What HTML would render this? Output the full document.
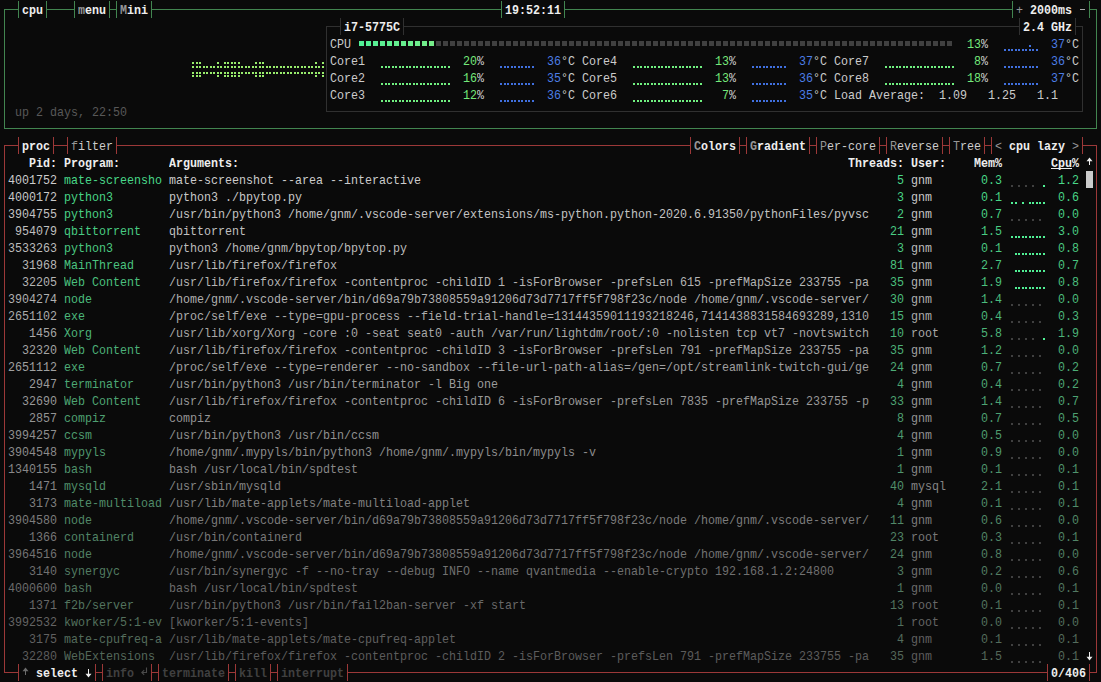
<!DOCTYPE html>
<html><head><meta charset="utf-8"><style>html,body{margin:0;padding:0;background:#0a0a0a;}
body{width:1101px;height:682px;overflow:hidden;position:relative;}
svg{position:absolute;left:0;top:0;}
i{position:absolute;font-style:normal;white-space:pre;font-family:"Liberation Mono";font-size:13.5px;line-height:17px;transform:scaleX(0.86406);transform-origin:0 0;}</style></head><body>
<svg width="1101" height="682" shape-rendering="crispEdges"><rect x="4" y="9" width="1093" height="1" fill="#428550"/><rect x="4" y="128" width="1093" height="1" fill="#428550"/><rect x="4" y="9" width="1" height="120" fill="#428550"/><rect x="1096" y="9" width="1" height="120" fill="#428550"/><rect x="19" y="9" width="27" height="1" fill="#0a0a0a"/><rect x="18" y="1" width="1" height="17" fill="#428550"/><rect x="46" y="1" width="1" height="17" fill="#428550"/><rect x="75" y="9" width="34" height="1" fill="#0a0a0a"/><rect x="74" y="1" width="1" height="17" fill="#428550"/><rect x="109" y="1" width="1" height="17" fill="#428550"/><rect x="117" y="9" width="34" height="1" fill="#0a0a0a"/><rect x="116" y="1" width="1" height="17" fill="#428550"/><rect x="151" y="1" width="1" height="17" fill="#428550"/><rect x="502" y="9" width="62" height="1" fill="#0a0a0a"/><rect x="501" y="1" width="1" height="17" fill="#428550"/><rect x="564" y="1" width="1" height="17" fill="#428550"/><rect x="1013" y="9" width="76" height="1" fill="#0a0a0a"/><rect x="1012" y="1" width="1" height="17" fill="#428550"/><rect x="1089" y="1" width="1" height="17" fill="#428550"/><rect x="1080" y="9" width="5" height="1" fill="#a8a8a8"/><rect x="192" y="66" width="2" height="2" fill="#98ec6c"/><rect x="192" y="72" width="2" height="2" fill="#98ec6c"/><rect x="192" y="62" width="2" height="2" fill="#98ec6c"/><rect x="192" y="75" width="2" height="2" fill="#98ec6c"/><rect x="196" y="66" width="2" height="2" fill="#98ec6c"/><rect x="196" y="72" width="2" height="2" fill="#98ec6c"/><rect x="196" y="62" width="2" height="2" fill="#98ec6c"/><rect x="196" y="75" width="2" height="2" fill="#98ec6c"/><rect x="199" y="66" width="2" height="2" fill="#98ec6c"/><rect x="199" y="72" width="2" height="2" fill="#98ec6c"/><rect x="199" y="62" width="2" height="2" fill="#98ec6c"/><rect x="199" y="75" width="2" height="2" fill="#98ec6c"/><rect x="203" y="66" width="2" height="2" fill="#98ec6c"/><rect x="203" y="72" width="2" height="2" fill="#98ec6c"/><rect x="206" y="66" width="2" height="2" fill="#98ec6c"/><rect x="206" y="72" width="2" height="2" fill="#98ec6c"/><rect x="210" y="66" width="2" height="2" fill="#98ec6c"/><rect x="210" y="72" width="2" height="2" fill="#98ec6c"/><rect x="213" y="66" width="2" height="2" fill="#98ec6c"/><rect x="213" y="72" width="2" height="2" fill="#98ec6c"/><rect x="217" y="66" width="2" height="2" fill="#98ec6c"/><rect x="217" y="72" width="2" height="2" fill="#98ec6c"/><rect x="217" y="62" width="2" height="2" fill="#98ec6c"/><rect x="217" y="75" width="2" height="2" fill="#98ec6c"/><rect x="220" y="66" width="2" height="2" fill="#98ec6c"/><rect x="220" y="72" width="2" height="2" fill="#98ec6c"/><rect x="224" y="66" width="2" height="2" fill="#98ec6c"/><rect x="224" y="72" width="2" height="2" fill="#98ec6c"/><rect x="224" y="62" width="2" height="2" fill="#98ec6c"/><rect x="224" y="75" width="2" height="2" fill="#98ec6c"/><rect x="227" y="66" width="2" height="2" fill="#98ec6c"/><rect x="227" y="72" width="2" height="2" fill="#98ec6c"/><rect x="227" y="62" width="2" height="2" fill="#98ec6c"/><rect x="227" y="75" width="2" height="2" fill="#98ec6c"/><rect x="231" y="66" width="2" height="2" fill="#98ec6c"/><rect x="231" y="72" width="2" height="2" fill="#98ec6c"/><rect x="231" y="62" width="2" height="2" fill="#98ec6c"/><rect x="231" y="75" width="2" height="2" fill="#98ec6c"/><rect x="234" y="66" width="2" height="2" fill="#98ec6c"/><rect x="234" y="72" width="2" height="2" fill="#98ec6c"/><rect x="234" y="62" width="2" height="2" fill="#98ec6c"/><rect x="234" y="75" width="2" height="2" fill="#98ec6c"/><rect x="238" y="66" width="2" height="2" fill="#98ec6c"/><rect x="238" y="72" width="2" height="2" fill="#98ec6c"/><rect x="238" y="62" width="2" height="2" fill="#98ec6c"/><rect x="238" y="75" width="2" height="2" fill="#98ec6c"/><rect x="241" y="66" width="2" height="2" fill="#98ec6c"/><rect x="241" y="72" width="2" height="2" fill="#98ec6c"/><rect x="245" y="66" width="2" height="2" fill="#98ec6c"/><rect x="245" y="72" width="2" height="2" fill="#98ec6c"/><rect x="248" y="66" width="2" height="2" fill="#98ec6c"/><rect x="248" y="72" width="2" height="2" fill="#98ec6c"/><rect x="252" y="66" width="2" height="2" fill="#98ec6c"/><rect x="252" y="72" width="2" height="2" fill="#98ec6c"/><rect x="255" y="66" width="2" height="2" fill="#98ec6c"/><rect x="255" y="72" width="2" height="2" fill="#98ec6c"/><rect x="255" y="62" width="2" height="2" fill="#98ec6c"/><rect x="255" y="75" width="2" height="2" fill="#98ec6c"/><rect x="259" y="66" width="2" height="2" fill="#98ec6c"/><rect x="259" y="72" width="2" height="2" fill="#98ec6c"/><rect x="259" y="62" width="2" height="2" fill="#98ec6c"/><rect x="259" y="75" width="2" height="2" fill="#98ec6c"/><rect x="262" y="66" width="2" height="2" fill="#98ec6c"/><rect x="262" y="72" width="2" height="2" fill="#98ec6c"/><rect x="262" y="62" width="2" height="2" fill="#98ec6c"/><rect x="262" y="75" width="2" height="2" fill="#98ec6c"/><rect x="266" y="66" width="2" height="2" fill="#98ec6c"/><rect x="266" y="72" width="2" height="2" fill="#98ec6c"/><rect x="269" y="66" width="2" height="2" fill="#98ec6c"/><rect x="269" y="72" width="2" height="2" fill="#98ec6c"/><rect x="273" y="66" width="2" height="2" fill="#98ec6c"/><rect x="273" y="72" width="2" height="2" fill="#98ec6c"/><rect x="276" y="66" width="2" height="2" fill="#98ec6c"/><rect x="276" y="72" width="2" height="2" fill="#98ec6c"/><rect x="280" y="66" width="2" height="2" fill="#98ec6c"/><rect x="280" y="72" width="2" height="2" fill="#98ec6c"/><rect x="283" y="66" width="2" height="2" fill="#98ec6c"/><rect x="283" y="72" width="2" height="2" fill="#98ec6c"/><rect x="287" y="66" width="2" height="2" fill="#98ec6c"/><rect x="287" y="72" width="2" height="2" fill="#98ec6c"/><rect x="290" y="66" width="2" height="2" fill="#98ec6c"/><rect x="290" y="72" width="2" height="2" fill="#98ec6c"/><rect x="294" y="66" width="2" height="2" fill="#98ec6c"/><rect x="294" y="72" width="2" height="2" fill="#98ec6c"/><rect x="297" y="66" width="2" height="2" fill="#98ec6c"/><rect x="297" y="72" width="2" height="2" fill="#98ec6c"/><rect x="301" y="66" width="2" height="2" fill="#98ec6c"/><rect x="301" y="72" width="2" height="2" fill="#98ec6c"/><rect x="304" y="66" width="2" height="2" fill="#98ec6c"/><rect x="304" y="72" width="2" height="2" fill="#98ec6c"/><rect x="308" y="66" width="2" height="2" fill="#98ec6c"/><rect x="308" y="72" width="2" height="2" fill="#98ec6c"/><rect x="311" y="66" width="2" height="2" fill="#98ec6c"/><rect x="311" y="72" width="2" height="2" fill="#98ec6c"/><rect x="315" y="66" width="2" height="2" fill="#98ec6c"/><rect x="315" y="72" width="2" height="2" fill="#98ec6c"/><rect x="315" y="62" width="2" height="2" fill="#98ec6c"/><rect x="315" y="75" width="2" height="2" fill="#98ec6c"/><rect x="318" y="66" width="2" height="2" fill="#98ec6c"/><rect x="318" y="72" width="2" height="2" fill="#98ec6c"/><rect x="322" y="66" width="2" height="2" fill="#98ec6c"/><rect x="322" y="72" width="2" height="2" fill="#98ec6c"/><rect x="322" y="62" width="2" height="2" fill="#98ec6c"/><rect x="322" y="75" width="2" height="2" fill="#98ec6c"/><rect x="326" y="26" width="757" height="1" fill="#303030"/><rect x="326" y="111" width="757" height="1" fill="#303030"/><rect x="326" y="26" width="1" height="86" fill="#303030"/><rect x="1082" y="26" width="1" height="86" fill="#303030"/><rect x="341" y="26" width="62" height="1" fill="#0a0a0a"/><rect x="340" y="18" width="1" height="17" fill="#303030"/><rect x="403" y="18" width="1" height="17" fill="#303030"/><rect x="1020" y="26" width="55" height="1" fill="#0a0a0a"/><rect x="1019" y="18" width="1" height="17" fill="#303030"/><rect x="1075" y="18" width="1" height="17" fill="#303030"/><rect x="359" y="41" width="5" height="5" fill="#50f095"/><rect x="366" y="41" width="5" height="5" fill="#54f094"/><rect x="373" y="41" width="5" height="5" fill="#58ef93"/><rect x="380" y="41" width="5" height="5" fill="#5bef92"/><rect x="387" y="41" width="5" height="5" fill="#5fef91"/><rect x="394" y="41" width="5" height="5" fill="#63ee8f"/><rect x="401" y="41" width="5" height="5" fill="#67ee8e"/><rect x="408" y="41" width="5" height="5" fill="#6bee8d"/><rect x="415" y="41" width="5" height="5" fill="#6eed8c"/><rect x="422" y="41" width="5" height="5" fill="#72ed8b"/><rect x="429" y="41" width="5" height="5" fill="#76ed8a"/><rect x="436" y="41" width="5" height="5" fill="#404040"/><rect x="443" y="41" width="5" height="5" fill="#404040"/><rect x="450" y="41" width="5" height="5" fill="#404040"/><rect x="457" y="41" width="5" height="5" fill="#404040"/><rect x="464" y="41" width="5" height="5" fill="#404040"/><rect x="471" y="41" width="5" height="5" fill="#404040"/><rect x="478" y="41" width="5" height="5" fill="#404040"/><rect x="485" y="41" width="5" height="5" fill="#404040"/><rect x="492" y="41" width="5" height="5" fill="#404040"/><rect x="499" y="41" width="5" height="5" fill="#404040"/><rect x="506" y="41" width="5" height="5" fill="#404040"/><rect x="513" y="41" width="5" height="5" fill="#404040"/><rect x="520" y="41" width="5" height="5" fill="#404040"/><rect x="527" y="41" width="5" height="5" fill="#404040"/><rect x="534" y="41" width="5" height="5" fill="#404040"/><rect x="541" y="41" width="5" height="5" fill="#404040"/><rect x="548" y="41" width="5" height="5" fill="#404040"/><rect x="555" y="41" width="5" height="5" fill="#404040"/><rect x="562" y="41" width="5" height="5" fill="#404040"/><rect x="569" y="41" width="5" height="5" fill="#404040"/><rect x="576" y="41" width="5" height="5" fill="#404040"/><rect x="583" y="41" width="5" height="5" fill="#404040"/><rect x="590" y="41" width="5" height="5" fill="#404040"/><rect x="597" y="41" width="5" height="5" fill="#404040"/><rect x="604" y="41" width="5" height="5" fill="#404040"/><rect x="611" y="41" width="5" height="5" fill="#404040"/><rect x="618" y="41" width="5" height="5" fill="#404040"/><rect x="625" y="41" width="5" height="5" fill="#404040"/><rect x="632" y="41" width="5" height="5" fill="#404040"/><rect x="639" y="41" width="5" height="5" fill="#404040"/><rect x="646" y="41" width="5" height="5" fill="#404040"/><rect x="653" y="41" width="5" height="5" fill="#404040"/><rect x="660" y="41" width="5" height="5" fill="#404040"/><rect x="667" y="41" width="5" height="5" fill="#404040"/><rect x="674" y="41" width="5" height="5" fill="#404040"/><rect x="681" y="41" width="5" height="5" fill="#404040"/><rect x="688" y="41" width="5" height="5" fill="#404040"/><rect x="695" y="41" width="5" height="5" fill="#404040"/><rect x="702" y="41" width="5" height="5" fill="#404040"/><rect x="709" y="41" width="5" height="5" fill="#404040"/><rect x="716" y="41" width="5" height="5" fill="#404040"/><rect x="723" y="41" width="5" height="5" fill="#404040"/><rect x="730" y="41" width="5" height="5" fill="#404040"/><rect x="737" y="41" width="5" height="5" fill="#404040"/><rect x="744" y="41" width="5" height="5" fill="#404040"/><rect x="751" y="41" width="5" height="5" fill="#404040"/><rect x="758" y="41" width="5" height="5" fill="#404040"/><rect x="765" y="41" width="5" height="5" fill="#404040"/><rect x="772" y="41" width="5" height="5" fill="#404040"/><rect x="779" y="41" width="5" height="5" fill="#404040"/><rect x="786" y="41" width="5" height="5" fill="#404040"/><rect x="793" y="41" width="5" height="5" fill="#404040"/><rect x="800" y="41" width="5" height="5" fill="#404040"/><rect x="807" y="41" width="5" height="5" fill="#404040"/><rect x="814" y="41" width="5" height="5" fill="#404040"/><rect x="821" y="41" width="5" height="5" fill="#404040"/><rect x="828" y="41" width="5" height="5" fill="#404040"/><rect x="835" y="41" width="5" height="5" fill="#404040"/><rect x="842" y="41" width="5" height="5" fill="#404040"/><rect x="849" y="41" width="5" height="5" fill="#404040"/><rect x="856" y="41" width="5" height="5" fill="#404040"/><rect x="863" y="41" width="5" height="5" fill="#404040"/><rect x="870" y="41" width="5" height="5" fill="#404040"/><rect x="877" y="41" width="5" height="5" fill="#404040"/><rect x="884" y="41" width="5" height="5" fill="#404040"/><rect x="891" y="41" width="5" height="5" fill="#404040"/><rect x="898" y="41" width="5" height="5" fill="#404040"/><rect x="905" y="41" width="5" height="5" fill="#404040"/><rect x="912" y="41" width="5" height="5" fill="#404040"/><rect x="919" y="41" width="5" height="5" fill="#404040"/><rect x="926" y="41" width="5" height="5" fill="#404040"/><rect x="933" y="41" width="5" height="5" fill="#404040"/><rect x="940" y="41" width="5" height="5" fill="#404040"/><rect x="947" y="41" width="5" height="5" fill="#404040"/><rect x="1004" y="49" width="2" height="2" fill="#4070e0"/><rect x="1008" y="49" width="2" height="2" fill="#4070e0"/><rect x="1011" y="49" width="2" height="2" fill="#4070e0"/><rect x="1015" y="49" width="2" height="2" fill="#4070e0"/><rect x="1018" y="49" width="2" height="2" fill="#4070e0"/><rect x="1022" y="49" width="2" height="2" fill="#4070e0"/><rect x="1025" y="49" width="2" height="2" fill="#4070e0"/><rect x="1029" y="49" width="2" height="2" fill="#4070e0"/><rect x="1032" y="49" width="2" height="2" fill="#4070e0"/><rect x="1036" y="49" width="2" height="2" fill="#4070e0"/><rect x="1029" y="45" width="2" height="2" fill="#4070e0"/><rect x="381" y="66" width="2" height="2" fill="#70f080"/><rect x="385" y="66" width="2" height="2" fill="#70f080"/><rect x="388" y="66" width="2" height="2" fill="#70f080"/><rect x="392" y="66" width="2" height="2" fill="#70f080"/><rect x="395" y="66" width="2" height="2" fill="#70f080"/><rect x="399" y="66" width="2" height="2" fill="#70f080"/><rect x="402" y="66" width="2" height="2" fill="#70f080"/><rect x="406" y="66" width="2" height="2" fill="#70f080"/><rect x="409" y="66" width="2" height="2" fill="#70f080"/><rect x="413" y="66" width="2" height="2" fill="#70f080"/><rect x="416" y="66" width="2" height="2" fill="#70f080"/><rect x="420" y="66" width="2" height="2" fill="#70f080"/><rect x="423" y="66" width="2" height="2" fill="#70f080"/><rect x="427" y="66" width="2" height="2" fill="#70f080"/><rect x="430" y="66" width="2" height="2" fill="#70f080"/><rect x="434" y="66" width="2" height="2" fill="#70f080"/><rect x="437" y="66" width="2" height="2" fill="#70f080"/><rect x="441" y="66" width="2" height="2" fill="#70f080"/><rect x="444" y="66" width="2" height="2" fill="#70f080"/><rect x="448" y="66" width="2" height="2" fill="#70f080"/><rect x="500" y="66" width="2" height="2" fill="#4070e0"/><rect x="504" y="66" width="2" height="2" fill="#4070e0"/><rect x="507" y="66" width="2" height="2" fill="#4070e0"/><rect x="511" y="66" width="2" height="2" fill="#4070e0"/><rect x="514" y="66" width="2" height="2" fill="#4070e0"/><rect x="518" y="66" width="2" height="2" fill="#4070e0"/><rect x="521" y="66" width="2" height="2" fill="#4070e0"/><rect x="525" y="66" width="2" height="2" fill="#4070e0"/><rect x="528" y="66" width="2" height="2" fill="#4070e0"/><rect x="532" y="66" width="2" height="2" fill="#4070e0"/><rect x="381" y="83" width="2" height="2" fill="#70f080"/><rect x="385" y="83" width="2" height="2" fill="#70f080"/><rect x="388" y="83" width="2" height="2" fill="#70f080"/><rect x="392" y="83" width="2" height="2" fill="#70f080"/><rect x="395" y="83" width="2" height="2" fill="#70f080"/><rect x="399" y="83" width="2" height="2" fill="#70f080"/><rect x="402" y="83" width="2" height="2" fill="#70f080"/><rect x="406" y="83" width="2" height="2" fill="#70f080"/><rect x="409" y="83" width="2" height="2" fill="#70f080"/><rect x="413" y="83" width="2" height="2" fill="#70f080"/><rect x="416" y="83" width="2" height="2" fill="#70f080"/><rect x="420" y="83" width="2" height="2" fill="#70f080"/><rect x="423" y="83" width="2" height="2" fill="#70f080"/><rect x="427" y="83" width="2" height="2" fill="#70f080"/><rect x="430" y="83" width="2" height="2" fill="#70f080"/><rect x="434" y="83" width="2" height="2" fill="#70f080"/><rect x="437" y="83" width="2" height="2" fill="#70f080"/><rect x="441" y="83" width="2" height="2" fill="#70f080"/><rect x="444" y="83" width="2" height="2" fill="#70f080"/><rect x="448" y="83" width="2" height="2" fill="#70f080"/><rect x="500" y="83" width="2" height="2" fill="#4070e0"/><rect x="504" y="83" width="2" height="2" fill="#4070e0"/><rect x="507" y="83" width="2" height="2" fill="#4070e0"/><rect x="511" y="83" width="2" height="2" fill="#4070e0"/><rect x="514" y="83" width="2" height="2" fill="#4070e0"/><rect x="518" y="83" width="2" height="2" fill="#4070e0"/><rect x="521" y="83" width="2" height="2" fill="#4070e0"/><rect x="525" y="83" width="2" height="2" fill="#4070e0"/><rect x="528" y="83" width="2" height="2" fill="#4070e0"/><rect x="532" y="83" width="2" height="2" fill="#4070e0"/><rect x="381" y="100" width="2" height="2" fill="#70f080"/><rect x="385" y="100" width="2" height="2" fill="#70f080"/><rect x="388" y="100" width="2" height="2" fill="#70f080"/><rect x="392" y="100" width="2" height="2" fill="#70f080"/><rect x="395" y="100" width="2" height="2" fill="#70f080"/><rect x="399" y="100" width="2" height="2" fill="#70f080"/><rect x="402" y="100" width="2" height="2" fill="#70f080"/><rect x="406" y="100" width="2" height="2" fill="#70f080"/><rect x="409" y="100" width="2" height="2" fill="#70f080"/><rect x="413" y="100" width="2" height="2" fill="#70f080"/><rect x="416" y="100" width="2" height="2" fill="#70f080"/><rect x="420" y="100" width="2" height="2" fill="#70f080"/><rect x="423" y="100" width="2" height="2" fill="#70f080"/><rect x="427" y="100" width="2" height="2" fill="#70f080"/><rect x="430" y="100" width="2" height="2" fill="#70f080"/><rect x="434" y="100" width="2" height="2" fill="#70f080"/><rect x="437" y="100" width="2" height="2" fill="#70f080"/><rect x="441" y="100" width="2" height="2" fill="#70f080"/><rect x="444" y="100" width="2" height="2" fill="#70f080"/><rect x="448" y="100" width="2" height="2" fill="#70f080"/><rect x="500" y="100" width="2" height="2" fill="#4070e0"/><rect x="504" y="100" width="2" height="2" fill="#4070e0"/><rect x="507" y="100" width="2" height="2" fill="#4070e0"/><rect x="511" y="100" width="2" height="2" fill="#4070e0"/><rect x="514" y="100" width="2" height="2" fill="#4070e0"/><rect x="518" y="100" width="2" height="2" fill="#4070e0"/><rect x="521" y="100" width="2" height="2" fill="#4070e0"/><rect x="525" y="100" width="2" height="2" fill="#4070e0"/><rect x="528" y="100" width="2" height="2" fill="#4070e0"/><rect x="532" y="100" width="2" height="2" fill="#4070e0"/><rect x="633" y="66" width="2" height="2" fill="#70f080"/><rect x="637" y="66" width="2" height="2" fill="#70f080"/><rect x="640" y="66" width="2" height="2" fill="#70f080"/><rect x="644" y="66" width="2" height="2" fill="#70f080"/><rect x="647" y="66" width="2" height="2" fill="#70f080"/><rect x="651" y="66" width="2" height="2" fill="#70f080"/><rect x="654" y="66" width="2" height="2" fill="#70f080"/><rect x="658" y="66" width="2" height="2" fill="#70f080"/><rect x="661" y="66" width="2" height="2" fill="#70f080"/><rect x="665" y="66" width="2" height="2" fill="#70f080"/><rect x="668" y="66" width="2" height="2" fill="#70f080"/><rect x="672" y="66" width="2" height="2" fill="#70f080"/><rect x="675" y="66" width="2" height="2" fill="#70f080"/><rect x="679" y="66" width="2" height="2" fill="#70f080"/><rect x="682" y="66" width="2" height="2" fill="#70f080"/><rect x="686" y="66" width="2" height="2" fill="#70f080"/><rect x="689" y="66" width="2" height="2" fill="#70f080"/><rect x="693" y="66" width="2" height="2" fill="#70f080"/><rect x="696" y="66" width="2" height="2" fill="#70f080"/><rect x="700" y="66" width="2" height="2" fill="#70f080"/><rect x="752" y="66" width="2" height="2" fill="#4070e0"/><rect x="756" y="66" width="2" height="2" fill="#4070e0"/><rect x="759" y="66" width="2" height="2" fill="#4070e0"/><rect x="763" y="66" width="2" height="2" fill="#4070e0"/><rect x="766" y="66" width="2" height="2" fill="#4070e0"/><rect x="770" y="66" width="2" height="2" fill="#4070e0"/><rect x="773" y="66" width="2" height="2" fill="#4070e0"/><rect x="777" y="66" width="2" height="2" fill="#4070e0"/><rect x="780" y="66" width="2" height="2" fill="#4070e0"/><rect x="784" y="66" width="2" height="2" fill="#4070e0"/><rect x="633" y="83" width="2" height="2" fill="#70f080"/><rect x="637" y="83" width="2" height="2" fill="#70f080"/><rect x="640" y="83" width="2" height="2" fill="#70f080"/><rect x="644" y="83" width="2" height="2" fill="#70f080"/><rect x="647" y="83" width="2" height="2" fill="#70f080"/><rect x="651" y="83" width="2" height="2" fill="#70f080"/><rect x="654" y="83" width="2" height="2" fill="#70f080"/><rect x="658" y="83" width="2" height="2" fill="#70f080"/><rect x="661" y="83" width="2" height="2" fill="#70f080"/><rect x="665" y="83" width="2" height="2" fill="#70f080"/><rect x="668" y="83" width="2" height="2" fill="#70f080"/><rect x="672" y="83" width="2" height="2" fill="#70f080"/><rect x="675" y="83" width="2" height="2" fill="#70f080"/><rect x="679" y="83" width="2" height="2" fill="#70f080"/><rect x="682" y="83" width="2" height="2" fill="#70f080"/><rect x="686" y="83" width="2" height="2" fill="#70f080"/><rect x="689" y="83" width="2" height="2" fill="#70f080"/><rect x="693" y="83" width="2" height="2" fill="#70f080"/><rect x="696" y="83" width="2" height="2" fill="#70f080"/><rect x="700" y="83" width="2" height="2" fill="#70f080"/><rect x="752" y="83" width="2" height="2" fill="#4070e0"/><rect x="756" y="83" width="2" height="2" fill="#4070e0"/><rect x="759" y="83" width="2" height="2" fill="#4070e0"/><rect x="763" y="83" width="2" height="2" fill="#4070e0"/><rect x="766" y="83" width="2" height="2" fill="#4070e0"/><rect x="770" y="83" width="2" height="2" fill="#4070e0"/><rect x="773" y="83" width="2" height="2" fill="#4070e0"/><rect x="777" y="83" width="2" height="2" fill="#4070e0"/><rect x="780" y="83" width="2" height="2" fill="#4070e0"/><rect x="784" y="83" width="2" height="2" fill="#4070e0"/><rect x="633" y="100" width="2" height="2" fill="#70f080"/><rect x="637" y="100" width="2" height="2" fill="#70f080"/><rect x="640" y="100" width="2" height="2" fill="#70f080"/><rect x="644" y="100" width="2" height="2" fill="#70f080"/><rect x="647" y="100" width="2" height="2" fill="#70f080"/><rect x="651" y="100" width="2" height="2" fill="#70f080"/><rect x="654" y="100" width="2" height="2" fill="#70f080"/><rect x="658" y="100" width="2" height="2" fill="#70f080"/><rect x="661" y="100" width="2" height="2" fill="#70f080"/><rect x="665" y="100" width="2" height="2" fill="#70f080"/><rect x="668" y="100" width="2" height="2" fill="#70f080"/><rect x="672" y="100" width="2" height="2" fill="#70f080"/><rect x="675" y="100" width="2" height="2" fill="#70f080"/><rect x="679" y="100" width="2" height="2" fill="#70f080"/><rect x="682" y="100" width="2" height="2" fill="#70f080"/><rect x="686" y="100" width="2" height="2" fill="#70f080"/><rect x="689" y="100" width="2" height="2" fill="#70f080"/><rect x="693" y="100" width="2" height="2" fill="#70f080"/><rect x="696" y="100" width="2" height="2" fill="#70f080"/><rect x="700" y="100" width="2" height="2" fill="#70f080"/><rect x="752" y="100" width="2" height="2" fill="#4070e0"/><rect x="756" y="100" width="2" height="2" fill="#4070e0"/><rect x="759" y="100" width="2" height="2" fill="#4070e0"/><rect x="763" y="100" width="2" height="2" fill="#4070e0"/><rect x="766" y="100" width="2" height="2" fill="#4070e0"/><rect x="770" y="100" width="2" height="2" fill="#4070e0"/><rect x="773" y="100" width="2" height="2" fill="#4070e0"/><rect x="777" y="100" width="2" height="2" fill="#4070e0"/><rect x="780" y="100" width="2" height="2" fill="#4070e0"/><rect x="784" y="100" width="2" height="2" fill="#4070e0"/><rect x="885" y="66" width="2" height="2" fill="#70f080"/><rect x="889" y="66" width="2" height="2" fill="#70f080"/><rect x="892" y="66" width="2" height="2" fill="#70f080"/><rect x="896" y="66" width="2" height="2" fill="#70f080"/><rect x="899" y="66" width="2" height="2" fill="#70f080"/><rect x="903" y="66" width="2" height="2" fill="#70f080"/><rect x="906" y="66" width="2" height="2" fill="#70f080"/><rect x="910" y="66" width="2" height="2" fill="#70f080"/><rect x="913" y="66" width="2" height="2" fill="#70f080"/><rect x="917" y="66" width="2" height="2" fill="#70f080"/><rect x="920" y="66" width="2" height="2" fill="#70f080"/><rect x="924" y="66" width="2" height="2" fill="#70f080"/><rect x="927" y="66" width="2" height="2" fill="#70f080"/><rect x="931" y="66" width="2" height="2" fill="#70f080"/><rect x="934" y="66" width="2" height="2" fill="#70f080"/><rect x="938" y="66" width="2" height="2" fill="#70f080"/><rect x="941" y="66" width="2" height="2" fill="#70f080"/><rect x="945" y="66" width="2" height="2" fill="#70f080"/><rect x="948" y="66" width="2" height="2" fill="#70f080"/><rect x="952" y="66" width="2" height="2" fill="#70f080"/><rect x="1004" y="66" width="2" height="2" fill="#4070e0"/><rect x="1008" y="66" width="2" height="2" fill="#4070e0"/><rect x="1011" y="66" width="2" height="2" fill="#4070e0"/><rect x="1015" y="66" width="2" height="2" fill="#4070e0"/><rect x="1018" y="66" width="2" height="2" fill="#4070e0"/><rect x="1022" y="66" width="2" height="2" fill="#4070e0"/><rect x="1025" y="66" width="2" height="2" fill="#4070e0"/><rect x="1029" y="66" width="2" height="2" fill="#4070e0"/><rect x="1032" y="66" width="2" height="2" fill="#4070e0"/><rect x="1036" y="66" width="2" height="2" fill="#4070e0"/><rect x="885" y="83" width="2" height="2" fill="#70f080"/><rect x="889" y="83" width="2" height="2" fill="#70f080"/><rect x="892" y="83" width="2" height="2" fill="#70f080"/><rect x="896" y="83" width="2" height="2" fill="#70f080"/><rect x="899" y="83" width="2" height="2" fill="#70f080"/><rect x="903" y="83" width="2" height="2" fill="#70f080"/><rect x="906" y="83" width="2" height="2" fill="#70f080"/><rect x="910" y="83" width="2" height="2" fill="#70f080"/><rect x="913" y="83" width="2" height="2" fill="#70f080"/><rect x="917" y="83" width="2" height="2" fill="#70f080"/><rect x="920" y="83" width="2" height="2" fill="#70f080"/><rect x="924" y="83" width="2" height="2" fill="#70f080"/><rect x="927" y="83" width="2" height="2" fill="#70f080"/><rect x="931" y="83" width="2" height="2" fill="#70f080"/><rect x="934" y="83" width="2" height="2" fill="#70f080"/><rect x="938" y="83" width="2" height="2" fill="#70f080"/><rect x="941" y="83" width="2" height="2" fill="#70f080"/><rect x="945" y="83" width="2" height="2" fill="#70f080"/><rect x="948" y="83" width="2" height="2" fill="#70f080"/><rect x="952" y="83" width="2" height="2" fill="#70f080"/><rect x="1004" y="83" width="2" height="2" fill="#4070e0"/><rect x="1008" y="83" width="2" height="2" fill="#4070e0"/><rect x="1011" y="83" width="2" height="2" fill="#4070e0"/><rect x="1015" y="83" width="2" height="2" fill="#4070e0"/><rect x="1018" y="83" width="2" height="2" fill="#4070e0"/><rect x="1022" y="83" width="2" height="2" fill="#4070e0"/><rect x="1025" y="83" width="2" height="2" fill="#4070e0"/><rect x="1029" y="83" width="2" height="2" fill="#4070e0"/><rect x="1032" y="83" width="2" height="2" fill="#4070e0"/><rect x="1036" y="83" width="2" height="2" fill="#4070e0"/><rect x="4" y="145" width="1093" height="1" fill="#9c3838"/><rect x="4" y="672" width="1093" height="1" fill="#9c3838"/><rect x="4" y="145" width="1" height="528" fill="#9c3838"/><rect x="1096" y="145" width="1" height="528" fill="#9c3838"/><rect x="19" y="145" width="34" height="1" fill="#0a0a0a"/><rect x="18" y="137" width="1" height="17" fill="#9c3838"/><rect x="53" y="137" width="1" height="17" fill="#9c3838"/><rect x="68" y="145" width="48" height="1" fill="#0a0a0a"/><rect x="67" y="137" width="1" height="17" fill="#9c3838"/><rect x="116" y="137" width="1" height="17" fill="#9c3838"/><rect x="691" y="145" width="48" height="1" fill="#0a0a0a"/><rect x="690" y="137" width="1" height="17" fill="#9c3838"/><rect x="739" y="137" width="1" height="17" fill="#9c3838"/><rect x="747" y="145" width="62" height="1" fill="#0a0a0a"/><rect x="746" y="137" width="1" height="17" fill="#9c3838"/><rect x="809" y="137" width="1" height="17" fill="#9c3838"/><rect x="817" y="145" width="62" height="1" fill="#0a0a0a"/><rect x="816" y="137" width="1" height="17" fill="#9c3838"/><rect x="879" y="137" width="1" height="17" fill="#9c3838"/><rect x="887" y="145" width="55" height="1" fill="#0a0a0a"/><rect x="886" y="137" width="1" height="17" fill="#9c3838"/><rect x="942" y="137" width="1" height="17" fill="#9c3838"/><rect x="950" y="145" width="34" height="1" fill="#0a0a0a"/><rect x="949" y="137" width="1" height="17" fill="#9c3838"/><rect x="984" y="137" width="1" height="17" fill="#9c3838"/><rect x="992" y="145" width="90" height="1" fill="#0a0a0a"/><rect x="991" y="137" width="1" height="17" fill="#9c3838"/><rect x="1082" y="137" width="1" height="17" fill="#9c3838"/><rect x="1051" y="168" width="21" height="1" fill="#eeeeee"/><polygon shape-rendering="auto" points="1086.5,161.2 1089.5,157.6 1092.5,161.2" fill="#eeeeee"/><rect x="1089" y="161" width="1" height="4" fill="#eeeeee"/><rect x="1011" y="185" width="2" height="2" fill="#404040"/><rect x="1018" y="185" width="2" height="2" fill="#404040"/><rect x="1025" y="185" width="2" height="2" fill="#404040"/><rect x="1032" y="185" width="2" height="2" fill="#404040"/><rect x="1043" y="185" width="2" height="2" fill="#50f095"/><rect x="1011" y="202" width="2" height="2" fill="#50f095"/><rect x="1015" y="202" width="2" height="2" fill="#50f095"/><rect x="1022" y="202" width="2" height="2" fill="#50f095"/><rect x="1029" y="202" width="2" height="2" fill="#50f095"/><rect x="1032" y="202" width="2" height="2" fill="#50f095"/><rect x="1036" y="202" width="2" height="2" fill="#50f095"/><rect x="1039" y="202" width="2" height="2" fill="#50f095"/><rect x="1043" y="202" width="2" height="2" fill="#50f095"/><rect x="1011" y="219" width="2" height="2" fill="#404040"/><rect x="1018" y="219" width="2" height="2" fill="#404040"/><rect x="1025" y="219" width="2" height="2" fill="#404040"/><rect x="1032" y="219" width="2" height="2" fill="#404040"/><rect x="1039" y="219" width="2" height="2" fill="#404040"/><rect x="1011" y="236" width="2" height="2" fill="#50f095"/><rect x="1015" y="236" width="2" height="2" fill="#50f095"/><rect x="1018" y="236" width="2" height="2" fill="#50f095"/><rect x="1022" y="236" width="2" height="2" fill="#50f095"/><rect x="1025" y="236" width="2" height="2" fill="#50f095"/><rect x="1029" y="236" width="2" height="2" fill="#50f095"/><rect x="1032" y="236" width="2" height="2" fill="#50f095"/><rect x="1036" y="236" width="2" height="2" fill="#50f095"/><rect x="1039" y="236" width="2" height="2" fill="#50f095"/><rect x="1043" y="236" width="2" height="2" fill="#50f095"/><rect x="1015" y="253" width="2" height="2" fill="#50f095"/><rect x="1018" y="253" width="2" height="2" fill="#50f095"/><rect x="1022" y="253" width="2" height="2" fill="#50f095"/><rect x="1025" y="253" width="2" height="2" fill="#50f095"/><rect x="1029" y="253" width="2" height="2" fill="#50f095"/><rect x="1032" y="253" width="2" height="2" fill="#50f095"/><rect x="1036" y="253" width="2" height="2" fill="#50f095"/><rect x="1039" y="253" width="2" height="2" fill="#50f095"/><rect x="1043" y="253" width="2" height="2" fill="#50f095"/><rect x="1015" y="270" width="2" height="2" fill="#50f095"/><rect x="1018" y="270" width="2" height="2" fill="#50f095"/><rect x="1022" y="270" width="2" height="2" fill="#50f095"/><rect x="1025" y="270" width="2" height="2" fill="#50f095"/><rect x="1029" y="270" width="2" height="2" fill="#50f095"/><rect x="1032" y="270" width="2" height="2" fill="#50f095"/><rect x="1036" y="270" width="2" height="2" fill="#50f095"/><rect x="1039" y="270" width="2" height="2" fill="#50f095"/><rect x="1043" y="270" width="2" height="2" fill="#50f095"/><rect x="1015" y="287" width="2" height="2" fill="#50f095"/><rect x="1018" y="287" width="2" height="2" fill="#50f095"/><rect x="1022" y="287" width="2" height="2" fill="#50f095"/><rect x="1025" y="287" width="2" height="2" fill="#50f095"/><rect x="1029" y="287" width="2" height="2" fill="#50f095"/><rect x="1032" y="287" width="2" height="2" fill="#50f095"/><rect x="1036" y="287" width="2" height="2" fill="#50f095"/><rect x="1039" y="287" width="2" height="2" fill="#50f095"/><rect x="1043" y="287" width="2" height="2" fill="#50f095"/><rect x="1011" y="304" width="2" height="2" fill="#404040"/><rect x="1018" y="304" width="2" height="2" fill="#404040"/><rect x="1025" y="304" width="2" height="2" fill="#404040"/><rect x="1032" y="304" width="2" height="2" fill="#404040"/><rect x="1039" y="304" width="2" height="2" fill="#404040"/><rect x="1011" y="321" width="2" height="2" fill="#404040"/><rect x="1018" y="321" width="2" height="2" fill="#404040"/><rect x="1025" y="321" width="2" height="2" fill="#404040"/><rect x="1032" y="321" width="2" height="2" fill="#404040"/><rect x="1039" y="321" width="2" height="2" fill="#404040"/><rect x="1011" y="338" width="2" height="2" fill="#404040"/><rect x="1018" y="338" width="2" height="2" fill="#404040"/><rect x="1025" y="338" width="2" height="2" fill="#404040"/><rect x="1032" y="338" width="2" height="2" fill="#404040"/><rect x="1043" y="338" width="2" height="2" fill="#50f095"/><rect x="1011" y="355" width="2" height="2" fill="#404040"/><rect x="1018" y="355" width="2" height="2" fill="#404040"/><rect x="1025" y="355" width="2" height="2" fill="#404040"/><rect x="1032" y="355" width="2" height="2" fill="#404040"/><rect x="1039" y="355" width="2" height="2" fill="#404040"/><rect x="1011" y="372" width="2" height="2" fill="#404040"/><rect x="1018" y="372" width="2" height="2" fill="#404040"/><rect x="1025" y="372" width="2" height="2" fill="#404040"/><rect x="1032" y="372" width="2" height="2" fill="#404040"/><rect x="1039" y="372" width="2" height="2" fill="#404040"/><rect x="1011" y="389" width="2" height="2" fill="#404040"/><rect x="1018" y="389" width="2" height="2" fill="#404040"/><rect x="1025" y="389" width="2" height="2" fill="#404040"/><rect x="1032" y="389" width="2" height="2" fill="#404040"/><rect x="1039" y="389" width="2" height="2" fill="#404040"/><rect x="1011" y="406" width="2" height="2" fill="#404040"/><rect x="1018" y="406" width="2" height="2" fill="#404040"/><rect x="1025" y="406" width="2" height="2" fill="#404040"/><rect x="1032" y="406" width="2" height="2" fill="#404040"/><rect x="1039" y="406" width="2" height="2" fill="#404040"/><rect x="1011" y="423" width="2" height="2" fill="#404040"/><rect x="1018" y="423" width="2" height="2" fill="#404040"/><rect x="1025" y="423" width="2" height="2" fill="#404040"/><rect x="1032" y="423" width="2" height="2" fill="#404040"/><rect x="1039" y="423" width="2" height="2" fill="#404040"/><rect x="1011" y="440" width="2" height="2" fill="#404040"/><rect x="1018" y="440" width="2" height="2" fill="#404040"/><rect x="1025" y="440" width="2" height="2" fill="#404040"/><rect x="1032" y="440" width="2" height="2" fill="#404040"/><rect x="1039" y="440" width="2" height="2" fill="#404040"/><rect x="1011" y="457" width="2" height="2" fill="#404040"/><rect x="1018" y="457" width="2" height="2" fill="#404040"/><rect x="1025" y="457" width="2" height="2" fill="#404040"/><rect x="1032" y="457" width="2" height="2" fill="#404040"/><rect x="1039" y="457" width="2" height="2" fill="#404040"/><rect x="1011" y="474" width="2" height="2" fill="#404040"/><rect x="1018" y="474" width="2" height="2" fill="#404040"/><rect x="1025" y="474" width="2" height="2" fill="#404040"/><rect x="1032" y="474" width="2" height="2" fill="#404040"/><rect x="1039" y="474" width="2" height="2" fill="#404040"/><rect x="1011" y="491" width="2" height="2" fill="#404040"/><rect x="1018" y="491" width="2" height="2" fill="#404040"/><rect x="1025" y="491" width="2" height="2" fill="#404040"/><rect x="1032" y="491" width="2" height="2" fill="#404040"/><rect x="1039" y="491" width="2" height="2" fill="#404040"/><rect x="1011" y="508" width="2" height="2" fill="#404040"/><rect x="1018" y="508" width="2" height="2" fill="#404040"/><rect x="1025" y="508" width="2" height="2" fill="#404040"/><rect x="1032" y="508" width="2" height="2" fill="#404040"/><rect x="1039" y="508" width="2" height="2" fill="#404040"/><rect x="1011" y="525" width="2" height="2" fill="#404040"/><rect x="1018" y="525" width="2" height="2" fill="#404040"/><rect x="1025" y="525" width="2" height="2" fill="#404040"/><rect x="1032" y="525" width="2" height="2" fill="#404040"/><rect x="1039" y="525" width="2" height="2" fill="#404040"/><rect x="1011" y="542" width="2" height="2" fill="#404040"/><rect x="1018" y="542" width="2" height="2" fill="#404040"/><rect x="1025" y="542" width="2" height="2" fill="#404040"/><rect x="1032" y="542" width="2" height="2" fill="#404040"/><rect x="1039" y="542" width="2" height="2" fill="#404040"/><rect x="1011" y="559" width="2" height="2" fill="#404040"/><rect x="1018" y="559" width="2" height="2" fill="#404040"/><rect x="1025" y="559" width="2" height="2" fill="#404040"/><rect x="1032" y="559" width="2" height="2" fill="#404040"/><rect x="1039" y="559" width="2" height="2" fill="#404040"/><rect x="1011" y="576" width="2" height="2" fill="#404040"/><rect x="1018" y="576" width="2" height="2" fill="#404040"/><rect x="1025" y="576" width="2" height="2" fill="#404040"/><rect x="1032" y="576" width="2" height="2" fill="#404040"/><rect x="1039" y="576" width="2" height="2" fill="#404040"/><rect x="1011" y="593" width="2" height="2" fill="#404040"/><rect x="1018" y="593" width="2" height="2" fill="#404040"/><rect x="1025" y="593" width="2" height="2" fill="#404040"/><rect x="1032" y="593" width="2" height="2" fill="#404040"/><rect x="1039" y="593" width="2" height="2" fill="#404040"/><rect x="1011" y="610" width="2" height="2" fill="#404040"/><rect x="1018" y="610" width="2" height="2" fill="#404040"/><rect x="1025" y="610" width="2" height="2" fill="#404040"/><rect x="1032" y="610" width="2" height="2" fill="#404040"/><rect x="1039" y="610" width="2" height="2" fill="#404040"/><rect x="1011" y="627" width="2" height="2" fill="#404040"/><rect x="1018" y="627" width="2" height="2" fill="#404040"/><rect x="1025" y="627" width="2" height="2" fill="#404040"/><rect x="1032" y="627" width="2" height="2" fill="#404040"/><rect x="1039" y="627" width="2" height="2" fill="#404040"/><rect x="1011" y="644" width="2" height="2" fill="#404040"/><rect x="1018" y="644" width="2" height="2" fill="#404040"/><rect x="1025" y="644" width="2" height="2" fill="#404040"/><rect x="1032" y="644" width="2" height="2" fill="#404040"/><rect x="1039" y="644" width="2" height="2" fill="#404040"/><rect x="1011" y="661" width="2" height="2" fill="#404040"/><rect x="1018" y="661" width="2" height="2" fill="#404040"/><rect x="1025" y="661" width="2" height="2" fill="#404040"/><rect x="1032" y="661" width="2" height="2" fill="#404040"/><rect x="1039" y="661" width="2" height="2" fill="#404040"/><rect x="1086" y="171" width="7" height="17" fill="#cccccc"/><rect x="1089" y="652" width="1" height="5" fill="#eeeeee"/><polygon shape-rendering="auto" points="1086.5,656.8 1089.5,660.4 1092.5,656.8" fill="#eeeeee"/><rect x="19" y="672" width="76" height="1" fill="#0a0a0a"/><rect x="18" y="664" width="1" height="17" fill="#9c3838"/><rect x="95" y="664" width="1" height="17" fill="#9c3838"/><polygon shape-rendering="auto" points="22.5,671.2 25.5,667.6 28.5,671.2" fill="#6c6c6c"/><rect x="25" y="671" width="1" height="4" fill="#6c6c6c"/><rect x="88" y="669" width="1" height="5" fill="#eeeeee"/><polygon shape-rendering="auto" points="85.5,673.8 88.5,677.4 91.5,673.8" fill="#eeeeee"/><rect x="103" y="672" width="48" height="1" fill="#0a0a0a"/><rect x="102" y="664" width="1" height="17" fill="#9c3838"/><rect x="151" y="664" width="1" height="17" fill="#9c3838"/><rect x="159" y="672" width="69" height="1" fill="#0a0a0a"/><rect x="158" y="664" width="1" height="17" fill="#9c3838"/><rect x="228" y="664" width="1" height="17" fill="#9c3838"/><rect x="236" y="672" width="34" height="1" fill="#0a0a0a"/><rect x="235" y="664" width="1" height="17" fill="#9c3838"/><rect x="270" y="664" width="1" height="17" fill="#9c3838"/><rect x="278" y="672" width="69" height="1" fill="#0a0a0a"/><rect x="277" y="664" width="1" height="17" fill="#9c3838"/><rect x="347" y="664" width="1" height="17" fill="#9c3838"/><rect x="1048" y="672" width="41" height="1" fill="#0a0a0a"/><rect x="1047" y="664" width="1" height="17" fill="#9c3838"/><rect x="1089" y="664" width="1" height="17" fill="#9c3838"/><path shape-rendering="auto" d="M146.5 667.5V672.5H142.5M144.2 670.2L141.8 672.5L144.2 674.8" stroke="#4a4a4a" fill="none" stroke-width="1.1"/></svg>
<i style="left:22px;top:2px;color:#eeeeee;font-weight:bold">cpu</i><i style="left:78px;top:2px;color:#969696;font-weight:bold">m</i><i style="left:85px;top:2px;color:#eeeeee;font-weight:bold">enu</i><i style="left:120px;top:2px;color:#969696;font-weight:bold">M</i><i style="left:127px;top:2px;color:#eeeeee;font-weight:bold">ini</i><i style="left:505px;top:2px;color:#eeeeee;font-weight:bold">19:52:11</i><i style="left:1016px;top:2px;color:#969696">+</i><i style="left:1030px;top:2px;color:#eeeeee;font-weight:bold">2000ms</i><i style="left:15px;top:104px;color:#585858">up 2 days, 22:50</i><i style="left:344px;top:19px;color:#eeeeee;font-weight:bold">i7-5775C</i><i style="left:1023px;top:19px;color:#eeeeee;font-weight:bold">2.4 GHz</i><i style="left:330px;top:36px;color:#cccccc">CPU</i><i style="left:967px;top:36px;color:#74e87a">13</i><i style="left:981px;top:36px;color:#cccccc">%</i><i style="left:1051px;top:36px;color:#4c7ee6">37</i><i style="left:1065px;top:36px;color:#cccccc">°C</i><i style="left:330px;top:53px;color:#cccccc">Core1</i><i style="left:463px;top:53px;color:#74e87a">20</i><i style="left:477px;top:53px;color:#cccccc">%</i><i style="left:547px;top:53px;color:#4c7ee6">36</i><i style="left:561px;top:53px;color:#cccccc">°C</i><i style="left:330px;top:70px;color:#cccccc">Core2</i><i style="left:463px;top:70px;color:#74e87a">16</i><i style="left:477px;top:70px;color:#cccccc">%</i><i style="left:547px;top:70px;color:#4c7ee6">35</i><i style="left:561px;top:70px;color:#cccccc">°C</i><i style="left:330px;top:87px;color:#cccccc">Core3</i><i style="left:463px;top:87px;color:#74e87a">12</i><i style="left:477px;top:87px;color:#cccccc">%</i><i style="left:547px;top:87px;color:#4c7ee6">36</i><i style="left:561px;top:87px;color:#cccccc">°C</i><i style="left:582px;top:53px;color:#cccccc">Core4</i><i style="left:715px;top:53px;color:#74e87a">13</i><i style="left:729px;top:53px;color:#cccccc">%</i><i style="left:799px;top:53px;color:#4c7ee6">37</i><i style="left:813px;top:53px;color:#cccccc">°C</i><i style="left:582px;top:70px;color:#cccccc">Core5</i><i style="left:715px;top:70px;color:#74e87a">13</i><i style="left:729px;top:70px;color:#cccccc">%</i><i style="left:799px;top:70px;color:#4c7ee6">36</i><i style="left:813px;top:70px;color:#cccccc">°C</i><i style="left:582px;top:87px;color:#cccccc">Core6</i><i style="left:722px;top:87px;color:#74e87a">7</i><i style="left:729px;top:87px;color:#cccccc">%</i><i style="left:799px;top:87px;color:#4c7ee6">35</i><i style="left:813px;top:87px;color:#cccccc">°C</i><i style="left:834px;top:53px;color:#cccccc">Core7</i><i style="left:974px;top:53px;color:#74e87a">8</i><i style="left:981px;top:53px;color:#cccccc">%</i><i style="left:1051px;top:53px;color:#4c7ee6">36</i><i style="left:1065px;top:53px;color:#cccccc">°C</i><i style="left:834px;top:70px;color:#cccccc">Core8</i><i style="left:967px;top:70px;color:#74e87a">18</i><i style="left:981px;top:70px;color:#cccccc">%</i><i style="left:1051px;top:70px;color:#4c7ee6">37</i><i style="left:1065px;top:70px;color:#cccccc">°C</i><i style="left:834px;top:87px;color:#cccccc">Load Average:</i><i style="left:939px;top:87px;color:#cccccc">1.09</i><i style="left:988px;top:87px;color:#cccccc">1.25</i><i style="left:1037px;top:87px;color:#cccccc">1.1</i><i style="left:22px;top:138px;color:#eeeeee;font-weight:bold">proc</i><i style="left:71px;top:138px;color:#969696">f</i><i style="left:78px;top:138px;color:#cccccc">ilter</i><i style="left:694px;top:138px;color:#969696;font-weight:bold">C</i><i style="left:701px;top:138px;color:#eeeeee;font-weight:bold">olors</i><i style="left:750px;top:138px;color:#969696;font-weight:bold">G</i><i style="left:757px;top:138px;color:#eeeeee;font-weight:bold">radient</i><i style="left:820px;top:138px;color:#969696">P</i><i style="left:827px;top:138px;color:#cccccc">er-core</i><i style="left:890px;top:138px;color:#969696">R</i><i style="left:897px;top:138px;color:#cccccc">everse</i><i style="left:953px;top:138px;color:#969696">T</i><i style="left:960px;top:138px;color:#cccccc">ree</i><i style="left:995px;top:138px;color:#969696">&lt;</i><i style="left:1002px;top:138px;color:#eeeeee;font-weight:bold"> cpu lazy </i><i style="left:1072px;top:138px;color:#969696">&gt;</i><i style="left:29px;top:155px;color:#eeeeee;font-weight:bold">Pid:</i><i style="left:64px;top:155px;color:#eeeeee;font-weight:bold">Program:</i><i style="left:169px;top:155px;color:#eeeeee;font-weight:bold">Arguments:</i><i style="left:848px;top:155px;color:#eeeeee;font-weight:bold">Threads:</i><i style="left:911px;top:155px;color:#eeeeee;font-weight:bold">User:</i><i style="left:974px;top:155px;color:#eeeeee;font-weight:bold">Mem%</i><i style="left:1051px;top:155px;color:#eeeeee;font-weight:bold">Cpu%</i><i style="left:8px;top:172px;color:#cccccc">4001752</i><i style="left:64px;top:172px;color:#48d888">mate-screensho</i><i style="left:169px;top:172px;color:#cccccc">mate-screenshot --area --interactive</i><i style="left:897px;top:172px;color:#48d888">5</i><i style="left:911px;top:172px;color:#cccccc">gnm</i><i style="left:981px;top:172px;color:#48d888">0.3</i><i style="left:1058px;top:172px;color:#48d888">1.2</i><i style="left:8px;top:189px;color:#c8c8c8">4000172</i><i style="left:64px;top:189px;color:#48d486">python3</i><i style="left:169px;top:189px;color:#c8c8c8">python3 ./bpytop.py</i><i style="left:897px;top:189px;color:#48d486">3</i><i style="left:911px;top:189px;color:#c8c8c8">gnm</i><i style="left:981px;top:189px;color:#48d486">0.1</i><i style="left:1058px;top:189px;color:#48d486">0.6</i><i style="left:8px;top:206px;color:#c4c4c4">3904755</i><i style="left:64px;top:206px;color:#49d085">python3</i><i style="left:169px;top:206px;color:#c4c4c4">/usr/bin/python3 /home/gnm/.vscode-server/extensions/ms-python.python-2020.6.91350/pythonFiles/pyvsc</i><i style="left:897px;top:206px;color:#49d085">2</i><i style="left:911px;top:206px;color:#c4c4c4">gnm</i><i style="left:981px;top:206px;color:#49d085">0.7</i><i style="left:1058px;top:206px;color:#49d085">0.0</i><i style="left:15px;top:223px;color:#c0c0c0">954079</i><i style="left:64px;top:223px;color:#49cc83">qbittorrent</i><i style="left:169px;top:223px;color:#c0c0c0">qbittorrent</i><i style="left:890px;top:223px;color:#49cc83">21</i><i style="left:911px;top:223px;color:#c0c0c0">gnm</i><i style="left:981px;top:223px;color:#49cc83">1.5</i><i style="left:1058px;top:223px;color:#49cc83">3.0</i><i style="left:8px;top:240px;color:#bcbcbc">3533263</i><i style="left:64px;top:240px;color:#4ac881">python3</i><i style="left:169px;top:240px;color:#bcbcbc">python3 /home/gnm/bpytop/bpytop.py</i><i style="left:897px;top:240px;color:#4ac881">3</i><i style="left:911px;top:240px;color:#bcbcbc">gnm</i><i style="left:981px;top:240px;color:#4ac881">0.1</i><i style="left:1058px;top:240px;color:#4ac881">0.8</i><i style="left:22px;top:257px;color:#b8b8b8">31968</i><i style="left:64px;top:257px;color:#4ac480">MainThread</i><i style="left:169px;top:257px;color:#b8b8b8">/usr/lib/firefox/firefox</i><i style="left:890px;top:257px;color:#4ac480">81</i><i style="left:911px;top:257px;color:#b8b8b8">gnm</i><i style="left:981px;top:257px;color:#4ac480">2.7</i><i style="left:1058px;top:257px;color:#4ac480">0.7</i><i style="left:22px;top:274px;color:#b4b4b4">32205</i><i style="left:64px;top:274px;color:#4bc07e">Web Content</i><i style="left:169px;top:274px;color:#b4b4b4">/usr/lib/firefox/firefox -contentproc -childID 1 -isForBrowser -prefsLen 615 -prefMapSize 233755 -pa</i><i style="left:890px;top:274px;color:#4bc07e">35</i><i style="left:911px;top:274px;color:#b4b4b4">gnm</i><i style="left:981px;top:274px;color:#4bc07e">1.9</i><i style="left:1058px;top:274px;color:#4bc07e">0.8</i><i style="left:8px;top:291px;color:#b0b0b0">3904274</i><i style="left:64px;top:291px;color:#4bbc7c">node</i><i style="left:169px;top:291px;color:#b0b0b0">/home/gnm/.vscode-server/bin/d69a79b73808559a91206d73d7717ff5f798f23c/node /home/gnm/.vscode-server/</i><i style="left:890px;top:291px;color:#4bbc7c">30</i><i style="left:911px;top:291px;color:#b0b0b0">gnm</i><i style="left:981px;top:291px;color:#4bbc7c">1.4</i><i style="left:1058px;top:291px;color:#4bbc7c">0.0</i><i style="left:8px;top:308px;color:#acacac">2651102</i><i style="left:64px;top:308px;color:#4bb87b">exe</i><i style="left:169px;top:308px;color:#acacac">/proc/self/exe --type=gpu-process --field-trial-handle=13144359011193218246,7141438831584693289,1310</i><i style="left:890px;top:308px;color:#4bb87b">15</i><i style="left:911px;top:308px;color:#acacac">gnm</i><i style="left:981px;top:308px;color:#4bb87b">0.4</i><i style="left:1058px;top:308px;color:#4bb87b">0.3</i><i style="left:29px;top:325px;color:#a8a8a8">1456</i><i style="left:64px;top:325px;color:#4cb479">Xorg</i><i style="left:169px;top:325px;color:#a8a8a8">/usr/lib/xorg/Xorg -core :0 -seat seat0 -auth /var/run/lightdm/root/:0 -nolisten tcp vt7 -novtswitch</i><i style="left:890px;top:325px;color:#4cb479">10</i><i style="left:911px;top:325px;color:#a8a8a8">root</i><i style="left:981px;top:325px;color:#4cb479">5.8</i><i style="left:1058px;top:325px;color:#4cb479">1.9</i><i style="left:22px;top:342px;color:#a4a4a4">32320</i><i style="left:64px;top:342px;color:#4cb078">Web Content</i><i style="left:169px;top:342px;color:#a4a4a4">/usr/lib/firefox/firefox -contentproc -childID 3 -isForBrowser -prefsLen 791 -prefMapSize 233755 -pa</i><i style="left:890px;top:342px;color:#4cb078">35</i><i style="left:911px;top:342px;color:#a4a4a4">gnm</i><i style="left:981px;top:342px;color:#4cb078">1.2</i><i style="left:1058px;top:342px;color:#4cb078">0.0</i><i style="left:8px;top:359px;color:#a0a0a0">2651112</i><i style="left:64px;top:359px;color:#4dac76">exe</i><i style="left:169px;top:359px;color:#a0a0a0">/proc/self/exe --type=renderer --no-sandbox --file-url-path-alias=/gen=/opt/streamlink-twitch-gui/ge</i><i style="left:890px;top:359px;color:#4dac76">24</i><i style="left:911px;top:359px;color:#a0a0a0">gnm</i><i style="left:981px;top:359px;color:#4dac76">0.7</i><i style="left:1058px;top:359px;color:#4dac76">0.2</i><i style="left:29px;top:376px;color:#9c9c9c">2947</i><i style="left:64px;top:376px;color:#4da874">terminator</i><i style="left:169px;top:376px;color:#9c9c9c">/usr/bin/python3 /usr/bin/terminator -l Big one</i><i style="left:897px;top:376px;color:#4da874">4</i><i style="left:911px;top:376px;color:#9c9c9c">gnm</i><i style="left:981px;top:376px;color:#4da874">0.4</i><i style="left:1058px;top:376px;color:#4da874">0.2</i><i style="left:22px;top:393px;color:#989898">32690</i><i style="left:64px;top:393px;color:#4ea473">Web Content</i><i style="left:169px;top:393px;color:#989898">/usr/lib/firefox/firefox -contentproc -childID 6 -isForBrowser -prefsLen 7835 -prefMapSize 233755 -p</i><i style="left:890px;top:393px;color:#4ea473">33</i><i style="left:911px;top:393px;color:#989898">gnm</i><i style="left:981px;top:393px;color:#4ea473">1.4</i><i style="left:1058px;top:393px;color:#4ea473">0.7</i><i style="left:29px;top:410px;color:#949494">2857</i><i style="left:64px;top:410px;color:#4ea071">compiz</i><i style="left:169px;top:410px;color:#949494">compiz</i><i style="left:897px;top:410px;color:#4ea071">8</i><i style="left:911px;top:410px;color:#949494">gnm</i><i style="left:981px;top:410px;color:#4ea071">0.7</i><i style="left:1058px;top:410px;color:#4ea071">0.5</i><i style="left:8px;top:427px;color:#909090">3994257</i><i style="left:64px;top:427px;color:#4e9c6f">ccsm</i><i style="left:169px;top:427px;color:#909090">/usr/bin/python3 /usr/bin/ccsm</i><i style="left:897px;top:427px;color:#4e9c6f">4</i><i style="left:911px;top:427px;color:#909090">gnm</i><i style="left:981px;top:427px;color:#4e9c6f">0.5</i><i style="left:1058px;top:427px;color:#4e9c6f">0.0</i><i style="left:8px;top:444px;color:#8c8c8c">3904548</i><i style="left:64px;top:444px;color:#4f986e">mypyls</i><i style="left:169px;top:444px;color:#8c8c8c">/home/gnm/.mypyls/bin/python3 /home/gnm/.mypyls/bin/mypyls -v</i><i style="left:897px;top:444px;color:#4f986e">1</i><i style="left:911px;top:444px;color:#8c8c8c">gnm</i><i style="left:981px;top:444px;color:#4f986e">0.9</i><i style="left:1058px;top:444px;color:#4f986e">0.0</i><i style="left:8px;top:461px;color:#888888">1340155</i><i style="left:64px;top:461px;color:#4f946c">bash</i><i style="left:169px;top:461px;color:#888888">bash /usr/local/bin/spdtest</i><i style="left:897px;top:461px;color:#4f946c">1</i><i style="left:911px;top:461px;color:#888888">gnm</i><i style="left:981px;top:461px;color:#4f946c">0.1</i><i style="left:1058px;top:461px;color:#4f946c">0.1</i><i style="left:29px;top:478px;color:#848484">1471</i><i style="left:64px;top:478px;color:#50906a">mysqld</i><i style="left:169px;top:478px;color:#848484">/usr/sbin/mysqld</i><i style="left:890px;top:478px;color:#50906a">40</i><i style="left:911px;top:478px;color:#848484">mysql</i><i style="left:981px;top:478px;color:#50906a">2.1</i><i style="left:1058px;top:478px;color:#50906a">0.1</i><i style="left:29px;top:495px;color:#808080">3173</i><i style="left:64px;top:495px;color:#508c69">mate-multiload</i><i style="left:169px;top:495px;color:#808080">/usr/lib/mate-applets/mate-multiload-applet</i><i style="left:897px;top:495px;color:#508c69">4</i><i style="left:911px;top:495px;color:#808080">gnm</i><i style="left:981px;top:495px;color:#508c69">0.1</i><i style="left:1058px;top:495px;color:#508c69">0.1</i><i style="left:8px;top:512px;color:#7c7c7c">3904580</i><i style="left:64px;top:512px;color:#518867">node</i><i style="left:169px;top:512px;color:#7c7c7c">/home/gnm/.vscode-server/bin/d69a79b73808559a91206d73d7717ff5f798f23c/node /home/gnm/.vscode-server/</i><i style="left:890px;top:512px;color:#518867">11</i><i style="left:911px;top:512px;color:#7c7c7c">gnm</i><i style="left:981px;top:512px;color:#518867">0.6</i><i style="left:1058px;top:512px;color:#518867">0.0</i><i style="left:29px;top:529px;color:#787878">1366</i><i style="left:64px;top:529px;color:#518466">containerd</i><i style="left:169px;top:529px;color:#787878">/usr/bin/containerd</i><i style="left:890px;top:529px;color:#518466">23</i><i style="left:911px;top:529px;color:#787878">root</i><i style="left:981px;top:529px;color:#518466">0.3</i><i style="left:1058px;top:529px;color:#518466">0.1</i><i style="left:8px;top:546px;color:#747474">3964516</i><i style="left:64px;top:546px;color:#518064">node</i><i style="left:169px;top:546px;color:#747474">/home/gnm/.vscode-server/bin/d69a79b73808559a91206d73d7717ff5f798f23c/node /home/gnm/.vscode-server/</i><i style="left:890px;top:546px;color:#518064">24</i><i style="left:911px;top:546px;color:#747474">gnm</i><i style="left:981px;top:546px;color:#518064">0.8</i><i style="left:1058px;top:546px;color:#518064">0.0</i><i style="left:29px;top:563px;color:#707070">3140</i><i style="left:64px;top:563px;color:#527c62">synergyc</i><i style="left:169px;top:563px;color:#707070">/usr/bin/synergyc -f --no-tray --debug INFO --name qvantmedia --enable-crypto 192.168.1.2:24800</i><i style="left:897px;top:563px;color:#527c62">3</i><i style="left:911px;top:563px;color:#707070">gnm</i><i style="left:981px;top:563px;color:#527c62">0.2</i><i style="left:1058px;top:563px;color:#527c62">0.6</i><i style="left:8px;top:580px;color:#6c6c6c">4000600</i><i style="left:64px;top:580px;color:#527861">bash</i><i style="left:169px;top:580px;color:#6c6c6c">bash /usr/local/bin/spdtest</i><i style="left:897px;top:580px;color:#527861">1</i><i style="left:911px;top:580px;color:#6c6c6c">gnm</i><i style="left:981px;top:580px;color:#527861">0.0</i><i style="left:1058px;top:580px;color:#527861">0.1</i><i style="left:29px;top:597px;color:#686868">1371</i><i style="left:64px;top:597px;color:#53745f">f2b/server</i><i style="left:169px;top:597px;color:#686868">/usr/bin/python3 /usr/bin/fail2ban-server -xf start</i><i style="left:890px;top:597px;color:#53745f">13</i><i style="left:911px;top:597px;color:#686868">root</i><i style="left:981px;top:597px;color:#53745f">0.1</i><i style="left:1058px;top:597px;color:#53745f">0.1</i><i style="left:8px;top:614px;color:#646464">3992532</i><i style="left:64px;top:614px;color:#53705d">kworker/5:1-ev</i><i style="left:169px;top:614px;color:#646464">[kworker/5:1-events]</i><i style="left:897px;top:614px;color:#53705d">1</i><i style="left:911px;top:614px;color:#646464">root</i><i style="left:981px;top:614px;color:#53705d">0.0</i><i style="left:1058px;top:614px;color:#53705d">0.0</i><i style="left:29px;top:631px;color:#606060">3175</i><i style="left:64px;top:631px;color:#546c5c">mate-cpufreq-a</i><i style="left:169px;top:631px;color:#606060">/usr/lib/mate-applets/mate-cpufreq-applet</i><i style="left:897px;top:631px;color:#546c5c">4</i><i style="left:911px;top:631px;color:#606060">gnm</i><i style="left:981px;top:631px;color:#546c5c">0.1</i><i style="left:1058px;top:631px;color:#546c5c">0.1</i><i style="left:22px;top:648px;color:#5c5c5c">32280</i><i style="left:64px;top:648px;color:#54685a">WebExtensions</i><i style="left:169px;top:648px;color:#5c5c5c">/usr/lib/firefox/firefox -contentproc -childID 2 -isForBrowser -prefsLen 791 -prefMapSize 233755 -pa</i><i style="left:890px;top:648px;color:#54685a">35</i><i style="left:911px;top:648px;color:#5c5c5c">gnm</i><i style="left:981px;top:648px;color:#54685a">1.5</i><i style="left:1058px;top:648px;color:#54685a">0.1</i><i style="left:36px;top:665px;color:#eeeeee;font-weight:bold">select</i><i style="left:106px;top:665px;color:#404040;font-weight:bold">info</i><i style="left:162px;top:665px;color:#404040;font-weight:bold">terminate</i><i style="left:239px;top:665px;color:#404040;font-weight:bold">kill</i><i style="left:281px;top:665px;color:#404040;font-weight:bold">interrupt</i><i style="left:1051px;top:665px;color:#eeeeee;font-weight:bold">0/406</i>
</body></html>
